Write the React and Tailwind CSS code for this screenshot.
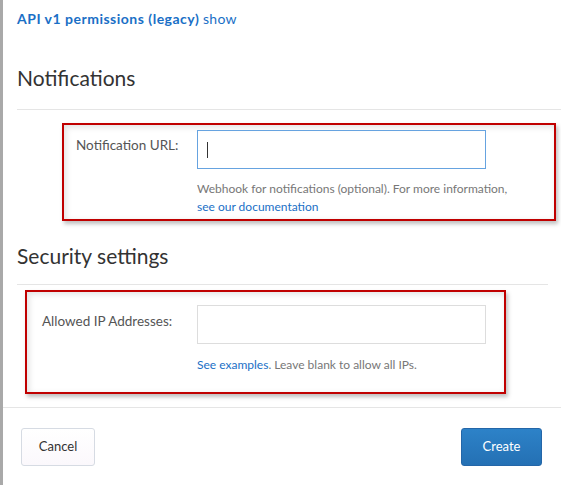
import React from 'react';

const App = () => {
  return (
    <div className="w-[561px] h-[485px] flex bg-white overflow-hidden text-[12px] text-[#555]" style={{ fontFamily: 'Lato, "Open Sans", sans-serif' }}>
      <div className="w-[3px] shrink-0 bg-[#a9a9a9]"></div>
      <div className="flex-1 flex flex-col">
        <div className="pl-[14px]">
          <div className="pt-[10px] leading-[18px] text-[14px]">
            <a className="font-bold tracking-[0.5px] text-[#1a6fc6]">API v1 permissions (legacy)</a>{' '}
            <a className="text-[#1a6fc6] tracking-[0.3px]">show</a>
          </div>

          <h2 className="mt-[36px] text-[21px] leading-[28px] text-[#333]">Notifications</h2>
          <div className="mt-[17px] border-t border-[#e5e5e5]"></div>

          <div className="mt-[13px] ml-[45px] w-[494px] border-2 border-[#c00000] shadow-[2px_3px_4px_rgba(0,0,0,0.25),inset_2px_2px_6px_rgba(0,0,0,0.12)] pl-[12px] pt-[5px] pb-[3px] flex">
            <label className="w-[121px] shrink-0 mt-[6px] leading-[18px] text-[13.5px] text-[#555]">Notification URL:</label>
            <div className="flex flex-col">
              <div className="w-[289px] h-[39px] border border-[#66a3e0] flex items-center pl-[9px]">
                <span className="w-px h-[16px] bg-[#333]"></span>
              </div>
              <p className="mt-[11px] leading-[18px] text-[#777] whitespace-nowrap">
                Webhook for notifications (optional). For more information,
                <br />
                <a className="text-[#1a6fc6]">see our documentation</a>
              </p>
            </div>
          </div>

          <h2 className="mt-[21px] text-[21px] leading-[28px] text-[#333]">Security settings</h2>
          <div className="mt-[14px] mr-[13px] border-t border-[#e5e5e5]"></div>

          <div className="mt-[5px] ml-[8px] w-[481px] border-2 border-[#c00000] shadow-[2px_3px_4px_rgba(0,0,0,0.25),inset_2px_2px_6px_rgba(0,0,0,0.12)] pl-[15px] pt-[13px] pb-[18px] flex">
            <label className="w-[155px] shrink-0 mt-[7px] leading-[18px] text-[13.5px] text-[#555]">Allowed IP Addresses:</label>
            <div className="flex flex-col">
              <div className="w-[289px] h-[39px] border border-[#ddd]"></div>
              <p className="mt-[12px] leading-[18px] text-[#777] whitespace-nowrap">
                <a className="text-[#1a6fc6]">See examples</a>. Leave blank to allow all IPs.
              </p>
            </div>
          </div>
        </div>

        <div className="mt-[13px] border-t border-[#e5e5e5]"></div>
        <div className="pt-[20px] pl-[18px] pr-[19px] flex justify-between">
          <button className="w-[74px] h-[38px] rounded-[3px] border border-[#d6dbe3] bg-gradient-to-b from-white to-[#fbf8fc] text-[13px] text-[#333]">Cancel</button>
          <button className="w-[81px] h-[38px] rounded-[3px] border border-[#2466a8] bg-gradient-to-b from-[#2d82c8] to-[#2470b4] text-[13px] text-white">Create</button>
        </div>
      </div>
    </div>
  );
};

export default App;
